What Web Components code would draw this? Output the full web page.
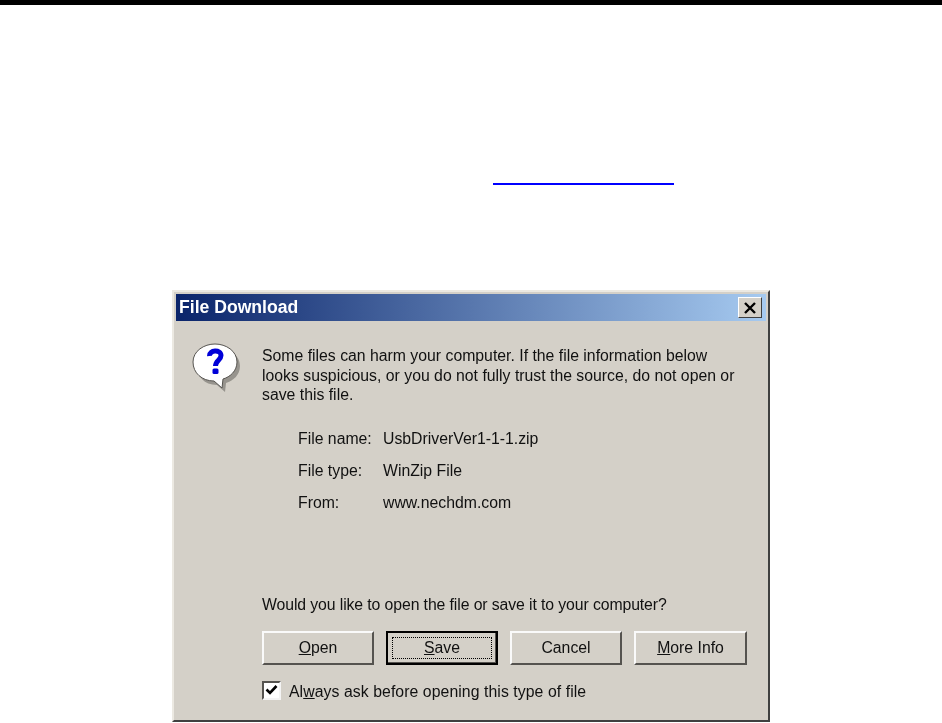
<!DOCTYPE html>
<html>
<head>
<meta charset="utf-8">
<style>
html, body { margin: 0; padding: 0; background: #fff; overflow: hidden; }
body { height: 723px; font-family: "Liberation Sans", Arial, sans-serif; }
</style>
</head>
<body>
<doc-page>
    <file-dialog heading="File Download">
        <dlg-message>Some files can harm your computer. If the file information below<br>looks suspicious, or you do not fully trust the source, do not open or<br>save this file.</dlg-message>
        <dlg-info label="File name:" value="UsbDriverVer1-1-1.zip"></dlg-info>
        <dlg-info label="File type:" value="WinZip File"></dlg-info>
        <dlg-info label="From:" value="www.nechdm.com"></dlg-info>
        <dlg-question>Would you like to open the file or save it to your computer?</dlg-question>
        <dlg-button slot="buttons"><u>O</u>pen</dlg-button>
        <dlg-button slot="buttons" focused><u>S</u>ave</dlg-button>
        <dlg-button slot="buttons">Cancel</dlg-button>
        <dlg-button slot="buttons" wide><u>M</u>ore Info</dlg-button>
        <dlg-check slot="check">Al<u>w</u>ays ask before opening this type of file</dlg-check>
    </file-dialog>
</doc-page>
<script>
class docPage extends HTMLElement {
    constructor() {
        super()
        this.attachShadow({ mode: 'open' })
        this.shadowRoot.innerHTML = `
            <style>
                :host { display: block; }
                .bar { height: 5px; background: #000; }
                .link { height: 2px; width: 181px; margin: 178px 0 0 493px; background: #0000ff; }
                .dialog-wrap { margin: 105px 0 0 172px; }
            </style>
            <div class="bar"></div>
            <div class="link"></div>
            <div class="dialog-wrap"><slot></slot></div>
        `
    }
}
customElements.define('doc-page', docPage)

class fileDialog extends HTMLElement {
    constructor() {
        super()
        this.attachShadow({ mode: 'open' })
        this.shadowRoot.innerHTML = `
            <style>
                :host {
                    display: block;
                    width: 598px;
                    height: 432px;
                    box-sizing: border-box;
                    background: #d4d0c8;
                    border: 2px solid;
                    border-color: #ece9e2 #404040 #404040 #ece9e2;
                    padding: 2px;
                    color: #111;
                    font-size: 15.8px;
                    filter: blur(0.3px);
                }
                .title {
                    height: 27px;
                    display: flex;
                    align-items: center;
                    justify-content: space-between;
                    padding: 0 4px 0 3px;
                    background: linear-gradient(90deg, #0a246a, #a6caf0);
                    color: #fff;
                    font-weight: bold;
                    font-size: 17.6px;
                }
                .close {
                    width: 24px;
                    height: 21px;
                    box-sizing: border-box;
                    background: #d4d0c8;
                    border: 1px solid;
                    border-color: #fff #404040 #404040 #fff;
                    display: flex;
                    align-items: center;
                    justify-content: center;
                }
                .body {
                    display: flex;
                    flex-direction: column;
                    padding: 0 0 0 86px;
                    position: relative;
                }
                .icon { position: absolute; left: 16px; top: 21px; }
                .buttons { display: flex; gap: 12px; }
                .check { margin-top: 16px; }
            </style>
            <div class="title">
                <span>${this.getAttribute('heading')}</span>
                <span class="close">
                    <svg width="14" height="12" viewBox="0 0 14 12"><path d="M2 1 L12 11 M12 1 L2 11" stroke="#000" stroke-width="2.4" fill="none"/></svg>
                </span>
            </div>
            <div class="body">
                <svg class="icon" width="50" height="52" viewBox="0 0 50 52">
                    <path d="M25 6 C37 6 48 13 48 24 C48 33 41 39 34 41 L33 50 L25 43 C12 43 5 34 5 24 C5 13 13 6 25 6Z" fill="#8c8a84" opacity=".85"/>
                    <path d="M23 2 C34 2 45 9 45 20 C45 29 38 35 31 37 L30 46 L22 39 C10 39 1 31 1 20 C1 9 12 2 23 2Z" fill="#fff" stroke="#55534f" stroke-width="1"/>
                    <path d="M17.5 14 C17 8 29 7 29 13.5 C29 18 23.5 18.5 23.5 24" fill="none" stroke="#0000d8" stroke-width="5"/>
                    <rect x="20.5" y="26.5" width="6" height="5.5" rx="1.5" fill="#0000d8"/>
                </svg>
                <slot></slot>
                <div class="buttons"><slot name="buttons"></slot></div>
                <div class="check"><slot name="check"></slot></div>
            </div>
        `
    }
}
customElements.define('file-dialog', fileDialog)

class dlgMessage extends HTMLElement {
    constructor() {
        super()
        this.attachShadow({ mode: 'open' })
        this.shadowRoot.innerHTML = `
            <style>:host { display: block; margin: 25px 0 18px 0; line-height: 19.5px; white-space: nowrap; }</style>
            <slot></slot>
        `
    }
}
customElements.define('dlg-message', dlgMessage)

class dlgInfo extends HTMLElement {
    constructor() {
        super()
        this.attachShadow({ mode: 'open' })
        this.shadowRoot.innerHTML = `
            <style>
                :host { display: flex; height: 32px; align-items: center; padding-left: 36px; white-space: nowrap; }
                .label { width: 85px; }
            </style>
            <span class="label">${this.getAttribute('label')}</span>
            <span>${this.getAttribute('value')}</span>
        `
    }
}
customElements.define('dlg-info', dlgInfo)

class dlgQuestion extends HTMLElement {
    constructor() {
        super()
        this.attachShadow({ mode: 'open' })
        this.shadowRoot.innerHTML = `
            <style>:host { display: block; margin: 77px 0 17px 0; line-height: 18px; white-space: nowrap; letter-spacing: -0.1px; }</style>
            <slot></slot>
        `
    }
}
customElements.define('dlg-question', dlgQuestion)

class dlgButton extends HTMLElement {
    constructor() {
        super()
        this.attachShadow({ mode: 'open' })
        const focused = this.hasAttribute('focused')
        this.shadowRoot.innerHTML = `
            <style>
                :host {
                    display: flex;
                    width: 112px;
                    height: 34px;
                    box-sizing: border-box;
                    align-items: center;
                    justify-content: center;
                    background: #d4d0c8;
                    border: 2px solid;
                    border-color: #fafafa #55534f #55534f #fafafa;
                    position: relative;
                }
                :host([wide]) { width: 113px; }
                :host([focused]) {
                    border-color: #000;
                    box-shadow: inset -1px -1px 0 #55534f;
                }
                .dots { position: absolute; inset: 4px; border: 1px dotted #000; }
            </style>
            ${focused ? '<div class="dots"></div>' : ''}
            <slot></slot>
        `
    }
}
customElements.define('dlg-button', dlgButton)

class dlgCheck extends HTMLElement {
    constructor() {
        super()
        this.attachShadow({ mode: 'open' })
        this.shadowRoot.innerHTML = `
            <style>
                :host { display: flex; align-items: center; gap: 8px; white-space: nowrap; letter-spacing: 0.07px; }
                .box {
                    width: 19px;
                    height: 19px;
                    margin-bottom: 4px;
                    box-sizing: border-box;
                    background: #fff;
                    border: 2px solid;
                    border-color: #55534f #f4f4f4 #f4f4f4 #55534f;
                    display: flex;
                    align-items: center;
                    justify-content: center;
                }
            </style>
            <span class="box">
                <svg width="13" height="12" viewBox="0 0 13 12"><path d="M1.5 5.5 L5 9 L11.5 2" stroke="#000" stroke-width="2.6" fill="none"/></svg>
            </span>
            <span><slot></slot></span>
        `
    }
}
customElements.define('dlg-check', dlgCheck)
</script>
</body>
</html>
